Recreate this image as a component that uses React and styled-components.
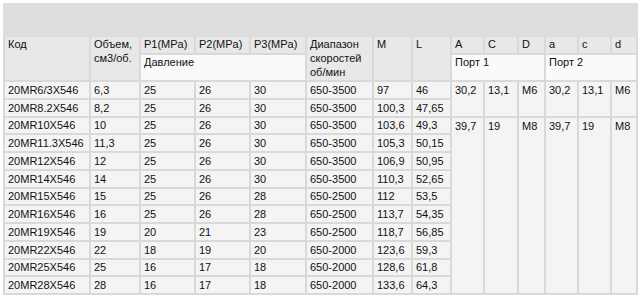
import React from 'react'
import styled, { createGlobalStyle } from 'styled-components'

const GlobalStyle = createGlobalStyle`
  body {
    margin: 0;
    background: #fff;
    font-family: "Liberation Sans", Arial, sans-serif;
  }
`
const Page = styled.div`
  padding: 3px 0 0 3px;
`
const Table = styled.table`
  width: 633px;
  table-layout: fixed;
  border-collapse: collapse;
  font-size: 11px;
  line-height: 14px;
  color: #111;
`
const Band = styled.td`
  height: 30px;
  background: #dddddd;
  border: 2px solid #dddddd;
  padding: 0;
`
const Head = styled.th`
  background: ${(props) => (props.sub ? '#fafafa' : '#e8e8e8')};
  border: 2px solid #d9d9d9;
  font-weight: normal;
  text-align: left;
  vertical-align: top;
  padding: 0 3px 0 3px;
  white-space: nowrap;
`
const HeadRow = styled.tr`
  height: ${(props) => props.h}px;
`
const Row = styled.tr`
  height: 17.75px;
`
const Cell = styled.td`
  background: #f4f4f4;
  border: 2px solid #d9d9d9;
  padding: 0 3px;
  vertical-align: ${(props) => (props.top ? 'top' : 'middle')};
  padding-top: ${(props) => (props.top ? '1px' : '0')};
  white-space: nowrap;
  overflow: hidden;
`

const widths = [86, 50, 55, 55, 56, 67, 39, 39, 33, 34, 27, 33, 33, 26]

const rows = [
  ['20MR6/3X546', '6,3', '25', '26', '30', '650-3500', '97', '46'],
  ['20MR8.2X546', '8,2', '25', '26', '30', '650-3500', '100,3', '47,65'],
  ['20MR10X546', '10', '25', '26', '30', '650-3500', '103,6', '49,3'],
  ['20MR11.3X546', '11,3', '25', '26', '30', '650-3500', '105,3', '50,15'],
  ['20MR12X546', '12', '25', '26', '30', '650-3500', '106,9', '50,95'],
  ['20MR14X546', '14', '25', '26', '30', '650-3500', '110,3', '52,65'],
  ['20MR15X546', '15', '25', '26', '28', '650-2500', '112', '53,5'],
  ['20MR16X546', '16', '25', '26', '28', '650-2500', '113,7', '54,35'],
  ['20MR19X546', '19', '20', '21', '23', '650-2500', '118,7', '56,85'],
  ['20MR22X546', '22', '18', '19', '20', '650-2000', '123,6', '59,3'],
  ['20MR25X546', '25', '16', '17', '18', '650-2000', '128,6', '61,8'],
  ['20MR28X546', '28', '16', '17', '18', '650-2000', '133,6', '64,3'],
]

// port dimensions are shared by groups of rows
const ports = {
  0: { span: 2, vals: ['30,2', '13,1', 'M6', '30,2', '13,1', 'M6'] },
  2: { span: 10, vals: ['39,7', '19', 'M8', '39,7', '19', 'M8'] },
}

function App() {
  return (
    <Page>
      <GlobalStyle />
      <Table>
        <colgroup>
          {widths.map((w, i) => (
            <col key={i} style={{ width: w }} />
          ))}
        </colgroup>
        <thead>
          <tr>
            <Band colSpan={14} />
          </tr>
          <HeadRow h={18}>
            <Head rowSpan={2}>Код</Head>
            <Head rowSpan={2}>
              Объем,
              <br />
              см3/об.
            </Head>
            <Head>P1(MPa)</Head>
            <Head>P2(MPa)</Head>
            <Head>P3(MPa)</Head>
            <Head rowSpan={2}>
              Диапазон
              <br />
              скоростей
              <br />
              об/мин
            </Head>
            <Head rowSpan={2}>M</Head>
            <Head rowSpan={2}>L</Head>
            <Head>A</Head>
            <Head>C</Head>
            <Head>D</Head>
            <Head>a</Head>
            <Head>c</Head>
            <Head>d</Head>
          </HeadRow>
          <HeadRow h={27}>
            <Head sub colSpan={3}>Давление</Head>
            <Head sub colSpan={3}>Порт 1</Head>
            <Head sub colSpan={3}>Порт 2</Head>
          </HeadRow>
        </thead>
        <tbody>
          {rows.map((r, i) => (
            <Row key={r[0]}>
              {r.map((v, j) => (
                <Cell key={j}>{v}</Cell>
              ))}
              {ports[i] &&
                ports[i].vals.map((v, j) => (
                  <Cell key={'p' + j} top rowSpan={ports[i].span}>
                    {v}
                  </Cell>
                ))}
            </Row>
          ))}
        </tbody>
      </Table>
    </Page>
  )
}

export default App
